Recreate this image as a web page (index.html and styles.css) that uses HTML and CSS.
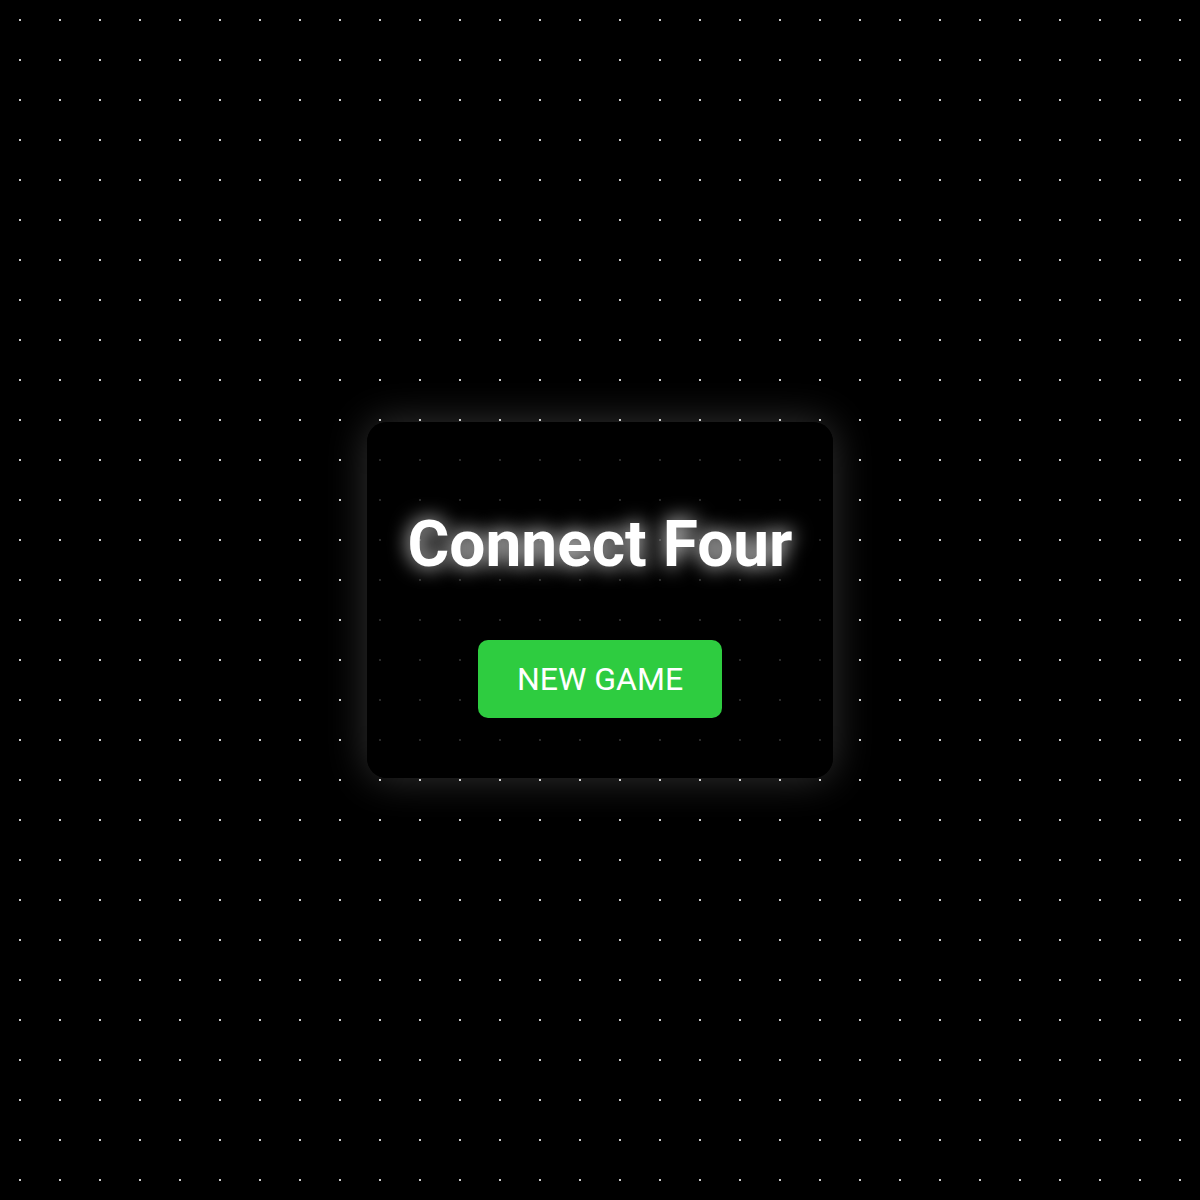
FILE: index.html
```html
<!DOCTYPE html>
<html lang="en">
<head>
    <meta charset="UTF-8">
    <meta name="viewport" content="width=device-width, initial-scale=1.0">
    <title>Connect Four</title>
    <link rel="stylesheet" href="styles.css">
</head>
<body>
    <main class="menu">
        <h1 class="title">Connect Four</h1>
        <button class="new-game" type="button">NEW GAME</button>
    </main>
</body>
</html>
```
FILE: styles.css
```css
body {
    font-family: Roboto, sans-serif;
    background-color: #000;
    background-image: radial-gradient(circle, #ccc 1px, transparent 1px);
    background-size: 40px 40px;
    margin: 0;
    min-height: 100vh;
    display: flex;
    justify-content: center;
    align-items: center;
    color: #fff;
    text-align: center;
}

.menu {
    padding: 40px;
    background: rgba(0, 0, 0, 0.8);
    border-radius: 20px;
    box-shadow: 0 0 40px rgba(255, 255, 255, 0.2);
}

.title {
    margin: 44px 0 36px;
    font-size: 64px;
    line-height: 78px;
    text-shadow: 0 0 20px #fff;
}

.new-game {
    margin: 20px;
    padding: 20px 39px;
    font-family: inherit;
    font-size: 32px;
    color: #fff;
    background-color: #2ecc40;
    border: none;
    border-radius: 10px;
    cursor: pointer;
}

.new-game:hover {
    background-color: #27ae36;
}
```
